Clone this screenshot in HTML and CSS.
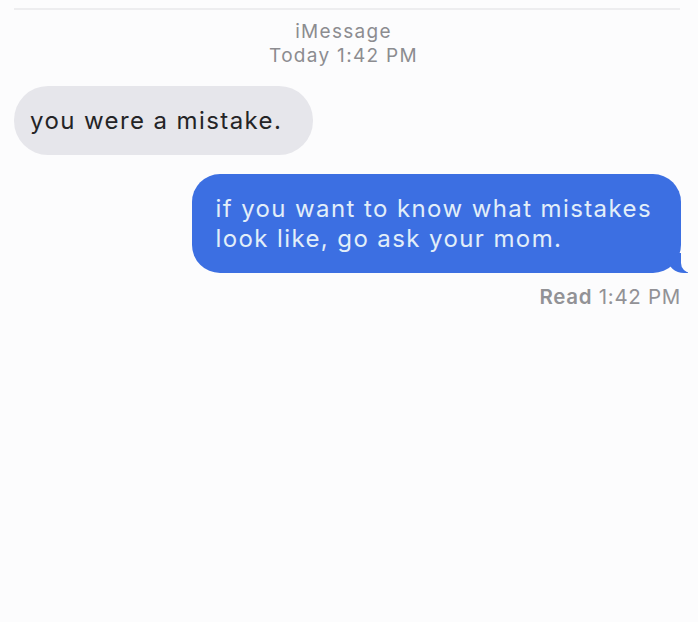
FILE: index.html
```html
<!DOCTYPE html>
<html lang="en">
  <head>
    <meta charset="UTF-8" />
    <meta name="viewport" content="width=device-width, initial-scale=1" />
    <title>iMessage</title>
    <link rel="stylesheet" href="styles.css">
  </head>
  <body>
    <div class="screen">
      <div class="topline"></div>

      <div class="stamp">
        <div>iMessage</div>
        <div>Today 1:42 PM</div>
      </div>

      <div class="row innkommende">
        <div class="boble grå">you were a mistake.</div>
      </div>

      <div class="row utgående">
        <div class="boble blå">
          if you want to know what mistakes<br />
          look like, go ask your mom.
        </div>
      </div>

      <div class="lest"><b>Read</b> 1:42 PM</div>
    </div>
  </body>
</html>
```

FILE: styles.css
```css
body {
  margin: 0;
  padding: 0;
  background: #fcfcfd;
  font-family: "Inter", "Liberation Sans", sans-serif;
  color: #222;
}

.screen {
  height: 622px;
  padding: 8px 17px 0 14px;
  box-sizing: border-box;
}

.topline {
  height: 2px;
  background: #ededef;
  margin-right: 1px;
}

.stamp {
  text-align: center;
  color: #8c8c90;
  font-size: 19px;
  letter-spacing: 1.3px;
  line-height: 24px;
  margin-top: 10px;
  margin-left: -8px;
}

.row {
  display: flex;
}

.innkommende {
  margin-top: 18px;
}

.utgående {
  justify-content: flex-end;
  margin-top: 19px;
}

.boble {
  font-size: 24px;
  letter-spacing: 1.4px;
  line-height: 30px;
  white-space: nowrap;
}

.grå {
  background: #e6e6eb;
  color: #242426;
  padding: 20px 31px 19px 16px;
  border-radius: 34px;
}

.blå {
  position: relative;
  background: #3c6fe2;
  color: #e2eef9;
  padding: 20px 29px 19px 23px;
  border-radius: 28px;
}

/* halen på boblen */
.blå::before {
  content: "";
  position: absolute;
  right: -7px;
  bottom: 0;
  width: 20px;
  height: 20px;
  background: #3c6fe2;
  border-bottom-left-radius: 16px 14px;
}

.blå::after {
  content: "";
  position: absolute;
  right: -12px;
  bottom: 0;
  width: 12px;
  height: 22px;
  background: #fcfcfd;
  border-bottom-left-radius: 10px;
}

.lest {
  text-align: right;
  color: #929296;
  font-size: 20.5px;
  letter-spacing: 0.7px;
  margin-top: 11px;
}

.lest b {
  font-weight: 600;
}
```
